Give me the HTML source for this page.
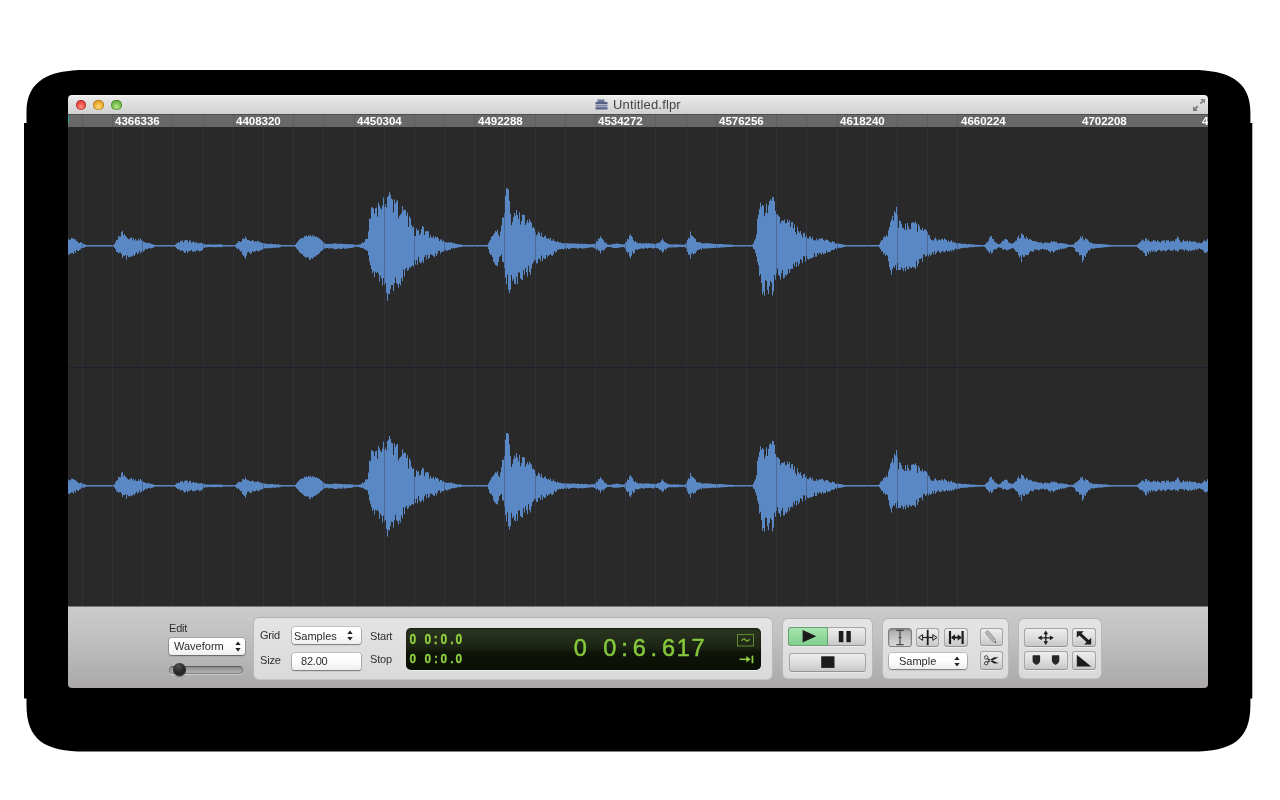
<!DOCTYPE html>
<html lang="en">
<head>
<meta charset="utf-8">
<title>Untitled.flpr</title>
<style>
*{box-sizing:border-box;margin:0;padding:0}
html,body{width:1280px;height:800px;overflow:hidden;background:#fff}
body{position:relative;font-family:"Liberation Sans","Helvetica Neue",Helvetica,Arial,sans-serif;font-size:11px;color:#2a2a2a}
.a{position:absolute}
.lb,.sel span,#ttext,#ruler b,.lcdt{will-change:transform}
#shadow{position:absolute;left:0;top:0;width:1280px;height:800px}
#title{left:68px;top:95px;width:1140px;height:19px;border-radius:4px 4px 0 0;background:linear-gradient(#f8f8f8 0,#e9e9e9 9%,#dedede 50%,#d0d0d0 100%)}
.tl{position:absolute;top:4.7px;width:10.8px;height:10.8px;border-radius:50%}
#ttext{left:612.6px;top:97.7px;height:14px;line-height:14px;font-size:13px;letter-spacing:.16px;color:#444;white-space:nowrap}
#ruler{left:68px;top:114px;width:1140px;height:13px;background:#686868;overflow:hidden;border-top:1px solid #4e4e4e}
#ruler i{position:absolute;top:-1px;width:1px;height:13px;background:#5a5d66}
#ruler b{position:absolute;top:0;height:13px;line-height:13px;font-size:11.5px;font-weight:bold;color:#fff;white-space:nowrap}
#wave{left:68px;top:127px;width:1140px;height:479px;background:#292929;overflow:hidden}
#wave i{position:absolute;top:0;width:1px;height:479px;background:rgba(58,66,84,.4)}
#wave svg{position:absolute;left:0;top:0}
#div{left:68px;top:367px;width:1140px;height:1px;background:#19222d}
#tb{left:68px;top:606px;width:1140px;height:82px;border-radius:0 0 4px 4px;background:linear-gradient(#cbcbcb 0,#c3c3c3 30%,#aaa8a8 100%);border-top:1px solid #7a7a7a}
.grp{position:absolute;top:618px;height:60.5px;border-radius:6px;background:linear-gradient(#e4e4e4,#dadada);border:1px solid #b9b9b9;border-top-color:#b1b1b1;border-bottom-color:#c6c4c4}
.lb{position:absolute;white-space:nowrap;font-size:11px;letter-spacing:-.2px;line-height:13px;height:13px;color:#303030}
.sel{position:absolute;border-radius:3px;background:linear-gradient(#ffffff 0,#fdfdfd 50%,#eeeeee 100%);box-shadow:0 0 0 .6px rgba(0,0,0,.28),0 1px 1.5px rgba(0,0,0,.38);white-space:nowrap;font-size:11px;color:#2c2c2c}
.sel span{position:absolute;line-height:13px;height:13px}
.sel svg{position:absolute}
.btn{position:absolute;border-radius:3px;background:linear-gradient(#ededed 0,#dedede 50%,#c8c8c8 100%);border:1px solid #a6a6a6;border-bottom-color:#949494;box-shadow:0 1px 0 rgba(255,255,255,.4)}
.btn svg{position:absolute;left:0;top:0}
#lcd{left:406px;top:627.5px;width:354.5px;height:42.5px;border-radius:5px;background:linear-gradient(#2d3622 0,#1c2514 45%,#0e1409 60%,#0a0f06 100%);box-shadow:0 1px 0 rgba(255,255,255,.6), inset 0 1px 2px rgba(0,0,0,.6)}
.lcdt{position:absolute;display:block;white-space:pre;color:#8fd13f;transform-origin:0 0}
.lcdt span{display:inline-block;text-align:center;vertical-align:top}
</style>
</head>
<body>
<svg id="shadow" viewBox="0 0 1280 800">
<path fill="#000" d="M85,70 H1192 C1227,70 1250.4,80 1250.4,112 V123 H1252.3 V698.5 H1250.4 V705 C1250.4,740 1232,751.6 1192,751.6 H85 C45,751.6 26.5,740 26.5,705 V698.5 H24 V123 H26.5 V112 C26.5,80 50,70 85,70Z"/>
</svg>

<!-- title bar -->
<div id="title" class="a">
 <span class="tl" style="left:7.6px;background:radial-gradient(circle at 50% 68%,#ff9088 0,#ea4c45 50%,#b9322d 100%);box-shadow:inset 0 0 0 .8px rgba(120,20,15,.45)"></span>
 <span class="tl" style="left:25.2px;background:radial-gradient(circle at 50% 68%,#ffdc7e 0,#efab33 50%,#c4841b 100%);box-shadow:inset 0 0 0 .8px rgba(130,80,10,.45)"></span>
 <span class="tl" style="left:43.2px;background:radial-gradient(circle at 50% 68%,#b9e88e 0,#73bd4b 50%,#4f9530 100%);box-shadow:inset 0 0 0 .8px rgba(40,90,20,.45)"></span>
</div>
<svg class="a" style="left:595px;top:99px" width="13" height="11" viewBox="0 0 13 11">
 <rect x="2.5" y="0.5" width="7" height="3" fill="#6d7597"/>
 <rect x="0.5" y="3" width="12" height="2.2" fill="#565f86"/>
 <rect x="0.5" y="5.8" width="12" height="1.8" fill="#7a82a3"/>
 <rect x="0.5" y="8.2" width="12" height="2.3" fill="#59618a"/>
</svg>
<div id="ttext" class="a">Untitled.flpr</div>
<svg class="a" style="left:1192px;top:98px" width="14" height="14" viewBox="0 0 14 14">
 <path d="M8.2,1 H13 V5.8 L11.3,4.1 L9,6.4 L7.6,5 L9.9,2.7 Z" fill="#8a8a8a"/>
 <path d="M5.8,13 H1 V8.2 L2.7,9.9 L5,7.6 L6.4,9 L4.1,11.3 Z" fill="#7a7a7a"/>
</svg>

<!-- ruler -->
<div id="ruler" class="a"><span class="a" style="left:0;top:1px;width:1px;height:7px;background:#25b0a6"></span><i style="left:14px"></i><i style="left:44px"></i><i style="left:74px"></i><i style="left:104px"></i><i style="left:135px"></i><i style="left:165px"></i><i style="left:195px"></i><i style="left:225px"></i><i style="left:255px"></i><i style="left:286px"></i><i style="left:316px"></i><i style="left:346px"></i><i style="left:376px"></i><i style="left:406px"></i><i style="left:436px"></i><i style="left:467px"></i><i style="left:497px"></i><i style="left:527px"></i><i style="left:557px"></i><i style="left:587px"></i><i style="left:618px"></i><i style="left:648px"></i><i style="left:678px"></i><i style="left:708px"></i><i style="left:738px"></i><i style="left:769px"></i><i style="left:799px"></i><i style="left:829px"></i><i style="left:859px"></i><i style="left:889px"></i><b style="left:47.4px">4366336</b><b style="left:168.2px">4408320</b><b style="left:288.9px">4450304</b><b style="left:409.7px">4492288</b><b style="left:530.4px">4534272</b><b style="left:651.2px">4576256</b><b style="left:771.9px">4618240</b><b style="left:892.7px">4660224</b><b style="left:1013.5px">4702208</b><b style="left:1134.2px">4744192</b></div>

<!-- waveform area -->
<div id="wave" class="a">
<svg width="1140" height="479" viewBox="0 0 1140 479">
<defs><path id="w" d="M0,-6.9V-6.9H1V-5.7H2V-6.2H3V-7.7H4V-7.6H5V-7.4H6V-6.2H7V-6.7H8V-4.7H9V-4.4H10V-3.0H11V-2.8H12V-3.7H13V-3.0H14V-2.8H15V-2.0H16V-1.6H17V-1.3H18V-0.9H19V-0.8H20V-0.8H21V-0.8H22V-0.8H23V-0.8H24V-0.8H25V-0.8H26V-0.8H27V-0.8H28V-0.8H29V-0.8H30V-0.8H31V-0.8H32V-0.8H33V-0.8H34V-0.8H35V-0.8H36V-0.8H37V-0.8H38V-0.8H39V-0.8H40V-0.8H41V-0.8H42V-0.8H43V-0.8H44V-0.8H45V-0.8H46V-1.8H47V-3.9H48V-5.8H49V-6.0H50V-9.5H51V-9.4H52V-9.2H53V-13.8H54V-15.0H55V-10.5H56V-11.7H57V-9.9H58V-9.1H59V-7.6H60V-6.6H61V-7.0H62V-7.6H63V-8.7H64V-6.0H65V-7.9H66V-5.3H67V-6.9H68V-5.2H69V-5.3H70V-7.0H71V-5.2H72V-7.3H73V-5.9H74V-4.2H75V-4.5H76V-3.9H77V-3.4H78V-2.9H79V-2.8H80V-3.4H81V-2.5H82V-2.2H83V-2.1H84V-1.6H85V-1.5H86V-1.1H87V-0.8H88V-0.8H89V-0.8H90V-0.8H91V-0.8H92V-0.8H93V-0.8H94V-0.8H95V-0.8H96V-0.8H97V-0.8H98V-0.8H99V-0.8H100V-0.8H101V-0.8H102V-0.8H103V-0.8H104V-0.8H105V-0.8H106V-0.8H107V-1.3H108V-2.4H109V-3.1H110V-3.5H111V-3.0H112V-5.0H113V-4.8H114V-5.5H115V-3.4H116V-5.0H117V-6.0H118V-5.5H119V-5.6H120V-3.4H121V-5.3H122V-5.4H123V-3.0H124V-3.7H125V-4.3H126V-3.2H127V-3.1H128V-4.1H129V-2.4H130V-2.7H131V-2.6H132V-2.7H133V-3.1H134V-2.6H135V-2.0H136V-1.9H137V-1.3H138V-1.4H139V-1.5H140V-1.5H141V-1.2H142V-1.4H143V-1.3H144V-1.3H145V-1.3H146V-1.4H147V-1.3H148V-1.3H149V-1.4H150V-1.2H151V-1.5H152V-1.5H153V-1.3H154V-1.0H155V-0.8H156V-0.8H157V-0.8H158V-0.8H159V-0.8H160V-0.8H161V-0.8H162V-0.8H163V-0.8H164V-0.8H165V-0.8H166V-0.8H167V-1.0H168V-2.2H169V-2.9H170V-4.7H171V-4.2H172V-3.9H173V-4.5H174V-7.1H175V-7.4H176V-6.7H177V-9.0H178V-7.2H179V-5.9H180V-6.0H181V-5.2H182V-4.9H183V-4.9H184V-5.7H185V-5.2H186V-3.7H187V-4.6H188V-4.1H189V-5.0H190V-4.7H191V-3.5H192V-3.8H193V-2.7H194V-2.9H195V-2.7H196V-2.6H197V-2.3H198V-2.1H199V-1.8H200V-2.0H201V-1.7H202V-2.0H203V-2.0H204V-1.9H205V-1.6H206V-1.8H207V-1.5H208V-1.4H209V-1.6H210V-1.5H211V-1.2H212V-1.0H213V-0.8H214V-0.8H215V-0.8H216V-0.8H217V-0.8H218V-0.8H219V-0.8H220V-0.8H221V-0.8H222V-0.8H223V-0.8H224V-0.8H225V-0.8H226V-0.8H227V-1.2H228V-2.6H229V-3.9H230V-5.3H231V-6.3H232V-7.3H233V-7.7H234V-7.6H235V-8.1H236V-9.8H237V-9.3H238V-10.4H239V-9.3H240V-10.6H241V-9.8H242V-11.0H243V-9.3H244V-10.6H245V-9.3H246V-10.0H247V-8.8H248V-9.3H249V-8.6H250V-8.1H251V-7.4H252V-6.5H253V-5.5H254V-4.6H255V-3.6H256V-2.9H257V-2.1H258V-1.9H259V-2.1H260V-2.0H261V-1.8H262V-2.1H263V-1.8H264V-2.0H265V-2.2H266V-2.4H267V-2.5H268V-2.1H269V-2.4H270V-1.9H271V-2.0H272V-2.2H273V-2.0H274V-2.0H275V-1.7H276V-1.9H277V-1.6H278V-1.8H279V-1.7H280V-1.6H281V-1.6H282V-1.6H283V-1.5H284V-1.5H285V-1.4H286V-1.2H287V-1.1H288V-1.1H289V-1.0H290V-1.2H291V-1.4H292V-1.5H293V-2.2H294V-3.6H295V-2.9H296V-4.0H297V-6.8H298V-7.0H299V-6.9H300V-14.4H301V-27.6H302V-26.7H303V-38.6H304V-38.4H305V-37.3H306V-32.1H307V-37.6H308V-38.2H309V-29.3H310V-43.2H311V-40.5H312V-38.1H313V-36.5H314V-40.4H315V-48.2H316V-38.9H317V-41.6H318V-38.4H319V-48.8H320V-50.0H321V-54.0H322V-51.2H323V-47.2H324V-46.3H325V-33.4H326V-46.3H327V-42.4H328V-44.5H329V-45.5H330V-27.6H331V-30.1H332V-31.2H333V-32.6H334V-39.8H335V-35.2H336V-36.4H337V-35.7H338V-30.3H339V-33.2H340V-18.9H341V-29.6H342V-27.6H343V-20.8H344V-18.2H345V-19.1H346V-9.8H347V-9.8H348V-17.2H349V-15.0H350V-16.1H351V-10.8H352V-12.4H353V-16.8H354V-19.7H355V-18.8H356V-10.7H357V-14.6H358V-14.4H359V-15.0H360V-14.5H361V-8.0H362V-10.9H363V-8.3H364V-8.1H365V-10.0H366V-7.2H367V-9.4H368V-8.6H369V-8.8H370V-7.2H371V-4.7H372V-6.4H373V-6.5H374V-4.4H375V-5.3H376V-4.1H377V-3.5H378V-3.6H379V-3.0H380V-3.5H381V-3.0H382V-3.7H383V-3.5H384V-2.6H385V-2.8H386V-2.5H387V-2.0H388V-1.7H389V-1.8H390V-1.5H391V-1.6H392V-1.3H393V-1.1H394V-0.9H395V-0.8H396V-0.8H397V-0.8H398V-0.8H399V-0.8H400V-0.8H401V-0.8H402V-0.8H403V-0.8H404V-0.8H405V-0.8H406V-0.8H407V-0.8H408V-0.8H409V-0.8H410V-0.8H411V-0.8H412V-0.8H413V-0.8H414V-0.8H415V-0.8H416V-0.8H417V-0.8H418V-0.8H419V-1.0H420V-2.6H421V-4.7H422V-6.0H423V-9.0H424V-9.9H425V-11.1H426V-12.9H427V-14.7H428V-14.1H429V-15.9H430V-11.2H431V-9.4H432V-14.4H433V-20.2H434V-28.4H435V-28.4H436V-32.6H437V-50.0H438V-57.5H439V-57.5H440V-56.0H441V-45.0H442V-32.1H443V-20.5H444V-24.1H445V-28.8H446V-32.8H447V-30.3H448V-35.7H449V-30.7H450V-26.8H451V-33.6H452V-21.2H453V-24.9H454V-31.2H455V-31.0H456V-30.8H457V-20.8H458V-23.3H459V-25.8H460V-23.1H461V-26.5H462V-24.5H463V-23.1H464V-18.0H465V-18.7H466V-17.1H467V-13.4H468V-10.4H469V-11.5H470V-14.4H471V-13.1H472V-9.8H473V-13.1H474V-8.8H475V-8.3H476V-9.5H477V-10.2H478V-7.3H479V-7.2H480V-7.6H481V-6.3H482V-8.1H483V-5.0H484V-5.0H485V-6.8H486V-4.8H487V-4.4H488V-3.6H489V-4.8H490V-3.6H491V-3.3H492V-3.4H493V-2.7H494V-2.9H495V-2.4H496V-2.7H497V-2.6H498V-2.5H499V-2.6H500V-2.4H501V-2.6H502V-2.2H503V-2.2H504V-2.6H505V-2.4H506V-2.1H507V-2.5H508V-2.0H509V-2.4H510V-2.4H511V-1.9H512V-2.0H513V-1.9H514V-2.2H515V-1.8H516V-2.0H517V-2.1H518V-1.9H519V-1.8H520V-1.5H521V-1.5H522V-1.8H523V-1.6H524V-1.7H525V-1.8H526V-2.1H527V-2.4H528V-4.8H529V-4.2H530V-7.4H531V-7.0H532V-9.6H533V-7.7H534V-6.7H535V-5.5H536V-3.4H537V-3.4H538V-2.2H539V-1.2H540V-1.1H541V-1.1H542V-1.2H543V-1.4H544V-1.5H545V-1.7H546V-2.2H547V-1.9H548V-2.4H549V-2.3H550V-2.0H551V-1.8H552V-1.8H553V-1.6H554V-1.2H555V-1.5H556V-1.7H557V-4.0H558V-3.7H559V-7.1H560V-6.4H561V-10.0H562V-11.5H563V-9.9H564V-8.5H565V-5.5H566V-4.0H567V-4.9H568V-3.2H569V-3.3H570V-2.3H571V-2.9H572V-3.1H573V-2.1H574V-2.5H575V-2.6H576V-2.4H577V-2.6H578V-2.7H579V-2.4H580V-2.7H581V-2.2H582V-2.3H583V-2.2H584V-2.3H585V-2.1H586V-2.1H587V-1.8H588V-2.3H589V-2.7H590V-3.4H591V-2.9H592V-4.2H593V-5.5H594V-7.2H595V-5.3H596V-3.9H597V-3.7H598V-2.8H599V-2.3H600V-1.8H601V-1.6H602V-1.3H603V-1.4H604V-1.4H605V-1.3H606V-1.6H607V-1.5H608V-1.5H609V-1.3H610V-1.4H611V-1.2H612V-1.2H613V-1.1H614V-1.2H615V-1.1H616V-1.0H617V-2.0H618V-3.2H619V-5.8H620V-8.1H621V-7.4H622V-14.2H623V-10.2H624V-9.8H625V-8.8H626V-7.8H627V-6.8H628V-4.1H629V-3.9H630V-3.5H631V-3.4H632V-3.8H633V-2.5H634V-2.2H635V-2.5H636V-2.4H637V-3.0H638V-2.3H639V-2.7H640V-2.7H641V-2.3H642V-2.6H643V-2.1H644V-2.0H645V-2.0H646V-1.9H647V-1.9H648V-1.9H649V-1.8H650V-1.7H651V-1.9H652V-1.9H653V-1.9H654V-1.8H655V-1.6H656V-1.3H657V-1.3H658V-1.3H659V-1.2H660V-1.2H661V-1.3H662V-1.2H663V-1.1H664V-1.0H665V-0.9H666V-0.8H667V-0.8H668V-0.8H669V-0.8H670V-0.8H671V-0.8H672V-0.8H673V-0.8H674V-0.8H675V-0.8H676V-0.8H677V-0.8H678V-0.8H679V-0.8H680V-0.8H681V-0.8H682V-0.8H683V-0.8H684V-1.0H685V-2.9H686V-5.2H687V-7.2H688V-11.2H689V-27.1H690V-31.4H691V-36.9H692V-43.0H693V-39.0H694V-40.8H695V-40.0H696V-29.6H697V-33.0H698V-42.0H699V-32.5H700V-40.3H701V-44.8H702V-46.5H703V-45.0H704V-49.0H705V-48.3H706V-44.5H707V-34.7H708V-31.0H709V-31.7H710V-30.1H711V-29.0H712V-22.6H713V-24.7H714V-25.3H715V-25.0H716V-26.2H717V-22.3H718V-22.9H719V-26.3H720V-23.7H721V-25.8H722V-19.1H723V-23.5H724V-23.9H725V-17.5H726V-21.2H727V-13.8H728V-11.4H729V-19.1H730V-14.7H731V-13.0H732V-14.8H733V-11.2H734V-8.5H735V-12.5H736V-13.1H737V-8.9H738V-10.7H739V-7.5H740V-7.0H741V-9.0H742V-9.2H743V-6.9H744V-8.7H745V-5.5H746V-5.4H747V-5.5H748V-7.3H749V-5.2H750V-6.4H751V-7.3H752V-6.7H753V-7.6H754V-7.7H755V-5.9H756V-4.7H757V-6.1H758V-6.3H759V-5.9H760V-5.3H761V-3.9H762V-3.5H763V-3.4H764V-4.6H765V-4.0H766V-3.6H767V-2.0H768V-2.4H769V-2.4H770V-2.3H771V-2.0H772V-1.9H773V-1.6H774V-1.5H775V-1.2H776V-1.0H777V-0.8H778V-0.8H779V-0.8H780V-0.8H781V-0.8H782V-0.8H783V-0.8H784V-0.8H785V-0.8H786V-0.8H787V-0.8H788V-0.8H789V-0.8H790V-0.8H791V-0.8H792V-0.8H793V-0.8H794V-0.8H795V-0.8H796V-0.8H797V-0.8H798V-0.8H799V-0.8H800V-0.8H801V-0.8H802V-0.8H803V-0.8H804V-0.8H805V-0.8H806V-0.8H807V-0.8H808V-0.8H809V-0.8H810V-0.8H811V-1.9H812V-3.8H813V-5.8H814V-5.3H815V-8.3H816V-9.6H817V-8.8H818V-11.1H819V-9.2H820V-15.8H821V-18.9H822V-23.9H823V-26.2H824V-29.9H825V-25.1H826V-34.9H827V-33.0H828V-39.0H829V-31.0H830V-18.0H831V-25.5H832V-24.7H833V-22.1H834V-18.4H835V-17.5H836V-16.0H837V-22.4H838V-16.0H839V-22.8H840V-19.3H841V-16.6H842V-16.8H843V-22.9H844V-23.5H845V-23.2H846V-22.9H847V-24.6H848V-22.3H849V-14.0H850V-21.9H851V-19.5H852V-16.2H853V-15.7H854V-18.1H855V-14.7H856V-16.5H857V-16.2H858V-15.4H859V-13.6H860V-11.0H861V-10.2H862V-7.1H863V-5.5H864V-5.7H865V-5.1H866V-7.1H867V-8.2H868V-6.3H869V-4.9H870V-6.3H871V-6.3H872V-5.6H873V-6.8H874V-6.8H875V-5.6H876V-7.6H877V-6.5H878V-5.7H879V-4.1H880V-5.6H881V-3.6H882V-4.9H883V-5.6H884V-3.3H885V-4.4H886V-3.3H887V-3.1H888V-2.3H889V-3.0H890V-2.6H891V-2.6H892V-2.2H893V-2.2H894V-1.9H895V-2.0H896V-2.0H897V-2.1H898V-1.6H899V-1.6H900V-1.7H901V-1.7H902V-1.5H903V-1.4H904V-1.5H905V-1.2H906V-1.3H907V-1.1H908V-1.1H909V-1.0H910V-1.0H911V-0.9H912V-0.9H913V-0.8H914V-0.8H915V-0.8H916V-1.1H917V-1.8H918V-3.4H919V-3.6H920V-5.0H921V-8.1H922V-9.5H923V-9.8H924V-6.9H925V-6.9H926V-4.2H927V-3.5H928V-3.0H929V-1.8H930V-1.7H931V-1.7H932V-2.4H933V-3.5H934V-5.1H935V-4.7H936V-6.6H937V-6.5H938V-6.7H939V-5.7H940V-3.3H941V-3.3H942V-2.6H943V-2.3H944V-2.3H945V-2.7H946V-3.6H947V-5.0H948V-5.2H949V-8.3H950V-10.1H951V-7.3H952V-7.8H953V-12.5H954V-11.4H955V-10.8H956V-8.0H957V-6.8H958V-9.2H959V-7.9H960V-5.9H961V-6.6H962V-6.7H963V-5.8H964V-4.7H965V-4.7H966V-4.9H967V-4.3H968V-4.4H969V-3.7H970V-3.6H971V-3.3H972V-3.5H973V-3.3H974V-2.2H975V-2.3H976V-3.5H977V-3.6H978V-2.7H979V-3.2H980V-2.9H981V-2.9H982V-3.6H983V-4.9H984V-3.5H985V-4.7H986V-4.3H987V-3.8H988V-4.0H989V-2.9H990V-2.4H991V-2.5H992V-2.8H993V-2.8H994V-2.4H995V-2.6H996V-2.0H997V-2.2H998V-1.9H999V-1.6H1000V-1.1H1001V-1.0H1002V-1.1H1003V-1.1H1004V-1.2H1005V-1.4H1006V-2.2H1007V-3.7H1008V-3.7H1009V-4.6H1010V-5.8H1011V-6.7H1012V-9.4H1013V-7.9H1014V-10.0H1015V-6.4H1016V-5.3H1017V-7.7H1018V-6.7H1019V-6.2H1020V-5.1H1021V-3.2H1022V-3.5H1023V-2.7H1024V-2.6H1025V-2.0H1026V-2.2H1027V-1.9H1028V-1.9H1029V-1.9H1030V-2.0H1031V-1.7H1032V-1.9H1033V-1.8H1034V-1.7H1035V-1.4H1036V-1.6H1037V-1.4H1038V-1.4H1039V-1.3H1040V-1.1H1041V-1.0H1042V-0.9H1043V-0.8H1044V-0.8H1045V-0.8H1046V-0.8H1047V-0.8H1048V-0.8H1049V-0.8H1050V-0.8H1051V-0.8H1052V-0.8H1053V-0.8H1054V-0.8H1055V-0.8H1056V-0.8H1057V-0.8H1058V-0.8H1059V-0.8H1060V-0.8H1061V-0.8H1062V-0.8H1063V-0.8H1064V-0.8H1065V-0.8H1066V-0.8H1067V-0.8H1068V-0.8H1069V-1.3H1070V-2.3H1071V-3.0H1072V-3.9H1073V-5.2H1074V-6.4H1075V-5.2H1076V-4.5H1077V-7.4H1078V-7.4H1079V-5.0H1080V-6.3H1081V-4.9H1082V-3.8H1083V-4.2H1084V-4.2H1085V-5.7H1086V-5.3H1087V-4.7H1088V-3.8H1089V-5.8H1090V-4.3H1091V-4.1H1092V-3.4H1093V-4.6H1094V-5.1H1095V-5.6H1096V-5.4H1097V-3.3H1098V-5.7H1099V-5.4H1100V-5.7H1101V-3.7H1102V-4.8H1103V-4.3H1104V-5.0H1105V-5.1H1106V-4.0H1107V-6.5H1108V-6.8H1109V-9.4H1110V-8.4H1111V-5.8H1112V-3.8H1113V-3.6H1114V-4.6H1115V-6.0H1116V-4.5H1117V-4.6H1118V-4.8H1119V-5.2H1120V-3.6H1121V-5.4H1122V-4.7H1123V-4.0H1124V-4.1H1125V-4.2H1126V-4.3H1127V-4.4H1128V-3.4H1129V-2.5H1130V-3.5H1131V-3.0H1132V-2.6H1133V-2.8H1134V-3.2H1135V-4.7H1136V-6.0H1137V-4.4H1138V-5.0H1139V-7.0H1140V5.8H1139V6.8H1138V7.2H1137V6.6H1136V5.2H1135V3.7H1134V4.0H1133V3.2H1132V2.7H1131V2.9H1130V3.6H1129V4.2H1128V2.9H1127V4.8H1126V4.1H1125V4.5H1124V4.8H1123V5.5H1122V4.1H1121V5.7H1120V5.0H1119V4.2H1118V3.4H1117V5.1H1116V4.1H1115V3.8H1114V3.4H1113V3.6H1112V3.4H1111V5.4H1110V5.8H1109V4.7H1108V5.2H1107V3.5H1106V4.2H1105V5.0H1104V4.6H1103V5.1H1102V3.9H1101V3.7H1100V4.1H1099V4.9H1098V5.8H1097V5.0H1096V4.4H1095V4.7H1094V5.8H1093V5.0H1092V3.9H1091V4.2H1090V5.0H1089V6.1H1088V5.8H1087V5.9H1086V4.5H1085V6.2H1084V4.7H1083V6.9H1082V5.2H1081V8.4H1080V6.3H1079V10.3H1078V10.2H1077V7.4H1076V6.6H1075V4.7H1074V5.1H1073V4.3H1072V3.8H1071V2.1H1070V1.6H1069V0.8H1068V0.8H1067V0.8H1066V0.8H1065V0.8H1064V0.8H1063V0.8H1062V0.8H1061V0.8H1060V0.8H1059V0.8H1058V0.8H1057V0.8H1056V0.8H1055V0.8H1054V0.8H1053V0.8H1052V0.8H1051V0.8H1050V0.8H1049V0.8H1048V0.8H1047V0.8H1046V0.8H1045V0.8H1044V0.8H1043V0.9H1042V1.0H1041V1.1H1040V1.0H1039V1.4H1038V1.4H1037V1.5H1036V1.6H1035V1.8H1034V1.9H1033V1.9H1032V2.1H1031V1.9H1030V2.1H1029V2.5H1028V2.4H1027V2.7H1026V2.9H1025V3.0H1024V2.4H1023V3.7H1022V4.9H1021V4.5H1020V6.8H1019V7.9H1018V11.2H1017V10.0H1016V14.2H1015V16.5H1014V9.1H1013V9.5H1012V9.7H1011V6.8H1010V6.5H1009V6.1H1008V5.1H1007V2.2H1006V1.8H1005V1.2H1004V1.1H1003V1.1H1002V1.0H1001V1.5H1000V1.5H999V1.9H998V2.6H997V2.6H996V3.2H995V2.4H994V3.8H993V2.9H992V3.9H991V3.5H990V4.5H989V4.5H988V4.8H987V5.9H986V7.0H985V5.5H984V4.9H983V6.9H982V5.7H981V5.3H980V3.7H979V4.1H978V3.4H977V4.2H976V3.0H975V3.2H974V4.0H973V3.3H972V4.4H971V4.8H970V4.0H969V4.0H968V3.9H967V3.7H966V5.9H965V5.8H964V5.3H963V5.4H962V6.8H961V8.9H960V9.2H959V9.7H958V8.7H957V11.0H956V11.1H955V9.1H954V16.5H953V9.9H952V12.2H951V9.4H950V6.2H949V6.2H948V5.4H947V3.5H946V2.8H945V2.2H944V2.8H943V2.9H942V3.8H941V4.0H940V4.5H939V4.7H938V3.5H937V3.1H936V4.2H935V3.5H934V2.0H933V2.1H932V1.8H931V1.5H930V2.1H929V3.6H928V3.5H927V3.4H926V4.4H925V7.0H924V7.7H923V5.5H922V7.4H921V6.0H920V4.7H919V3.5H918V1.7H917V1.1H916V0.8H915V0.8H914V0.8H913V0.9H912V0.9H911V1.0H910V1.0H909V1.1H908V1.0H907V1.3H906V1.4H905V1.5H904V1.5H903V1.3H902V1.6H901V1.7H900V2.0H899V1.9H898V2.1H897V2.0H896V2.0H895V2.5H894V2.1H893V2.7H892V3.2H891V3.0H890V3.6H889V3.7H888V2.8H887V3.8H886V5.5H885V3.9H884V5.6H883V4.3H882V6.0H881V5.2H880V5.7H879V4.5H878V5.6H877V6.4H876V6.0H875V4.6H874V6.1H873V7.0H872V6.7H871V4.8H870V5.8H869V7.0H868V8.7H867V5.5H866V8.7H865V6.2H864V8.8H863V10.0H862V8.4H861V10.6H860V8.1H859V10.1H858V11.0H857V8.8H856V8.8H855V16.1H854V12.3H853V13.1H852V13.2H851V17.6H850V21.0H849V15.0H848V23.2H847V21.6H846V21.4H845V20.9H844V22.4H843V22.0H842V20.6H841V23.5H840V23.4H839V20.7H838V25.4H837V22.3H836V25.4H835V22.9H834V21.5H833V24.1H832V24.2H831V24.3H830V17.2H829V24.5H828V19.1H827V22.2H826V20.8H825V23.4H824V29.0H823V24.6H822V21.5H821V15.4H820V10.0H819V9.0H818V9.9H817V7.5H816V8.6H815V5.5H814V5.7H813V3.2H812V1.6H811V0.8H810V0.8H809V0.8H808V0.8H807V0.8H806V0.8H805V0.8H804V0.8H803V0.8H802V0.8H801V0.8H800V0.8H799V0.8H798V0.8H797V0.8H796V0.8H795V0.8H794V0.8H793V0.8H792V0.8H791V0.8H790V0.8H789V0.8H788V0.8H787V0.8H786V0.8H785V0.8H784V0.8H783V0.8H782V0.8H781V0.8H780V0.8H779V0.8H778V1.0H777V1.3H776V1.4H775V1.5H774V2.1H773V2.0H772V2.0H771V2.4H770V1.9H769V3.4H768V2.2H767V3.8H766V4.3H765V4.2H764V4.1H763V5.9H762V6.2H761V6.1H760V6.9H759V5.0H758V7.7H757V7.7H756V8.5H755V6.6H754V9.0H753V7.6H752V6.9H751V8.9H750V7.1H749V11.0H748V11.0H747V7.5H746V11.2H745V12.2H744V12.7H743V12.1H742V13.1H741V13.6H740V13.0H739V10.3H738V15.7H737V10.7H736V10.1H735V17.2H734V14.4H733V13.3H732V18.0H731V20.0H730V16.0H729V21.3H728V16.3H727V20.5H726V18.0H725V23.3H724V22.9H723V23.6H722V27.3H721V23.3H720V28.3H719V29.9H718V28.9H717V32.0H716V32.4H715V24.1H714V27.4H713V33.7H712V30.5H711V29.2H710V22.7H709V27.4H708V33.6H707V29.2H706V45.7H705V49.8H704V36.9H703V35.2H702V40.4H701V48.2H700V44.1H699V35.1H698V34.5H697V50.0H696V46.0H695V48.8H694V37.3H693V28.1H692V30.2H691V19.4H690V15.9H689V10.6H688V7.3H687V3.7H686V3.1H685V1.0H684V0.8H683V0.8H682V0.8H681V0.8H680V0.8H679V0.8H678V0.8H677V0.8H676V0.8H675V0.8H674V0.8H673V0.8H672V0.8H671V0.8H670V0.8H669V0.8H668V0.8H667V0.8H666V0.9H665V1.0H664V1.1H663V1.2H662V1.1H661V1.1H660V1.3H659V1.3H658V1.4H657V1.7H656V1.5H655V1.6H654V1.7H653V1.8H652V2.0H651V1.9H650V2.0H649V2.0H648V2.3H647V2.0H646V2.1H645V2.2H644V2.5H643V2.1H642V2.5H641V2.7H640V2.8H639V2.5H638V3.0H637V2.6H636V3.0H635V2.1H634V4.1H633V2.9H632V3.7H631V4.1H630V4.3H629V5.7H628V7.8H627V7.6H626V8.8H625V7.3H624V8.1H623V13.0H622V8.6H621V9.0H620V6.1H619V3.0H618V2.0H617V1.0H616V1.1H615V1.2H614V1.2H613V1.3H612V1.1H611V1.5H610V1.5H609V1.5H608V1.6H607V1.6H606V1.5H605V1.7H604V1.6H603V1.7H602V1.6H601V1.7H600V2.5H599V2.9H598V4.5H597V3.3H596V5.9H595V7.0H594V5.0H593V3.9H592V4.6H591V2.9H590V2.5H589V2.4H588V2.1H587V2.1H586V2.8H585V2.8H584V2.3H583V2.0H582V2.2H581V2.3H580V2.7H579V2.5H578V2.0H577V2.8H576V3.2H575V2.6H574V2.5H573V3.0H572V3.1H571V3.5H570V4.2H569V3.7H568V3.6H567V7.1H566V8.1H565V5.6H564V9.9H563V12.4H562V10.7H561V6.2H560V7.1H559V5.6H558V3.4H557V1.8H556V1.4H555V1.2H554V1.3H553V1.8H552V1.8H551V1.9H550V2.2H549V2.1H548V2.2H547V2.2H546V2.1H545V1.9H544V1.4H543V1.2H542V1.1H541V1.2H540V1.2H539V1.8H538V2.6H537V3.8H536V5.3H535V3.9H534V4.8H533V7.7H532V4.7H531V5.0H530V3.0H529V3.9H528V3.1H527V2.4H526V1.9H525V1.5H524V1.5H523V1.8H522V1.8H521V1.9H520V2.2H519V2.0H518V2.4H517V2.4H516V2.6H515V2.7H514V2.6H513V2.3H512V2.3H511V2.9H510V2.9H509V2.4H508V2.5H507V2.0H506V2.1H505V2.5H504V2.3H503V2.5H502V3.4H501V3.3H500V2.1H499V3.5H498V2.2H497V2.9H496V3.7H495V3.2H494V3.1H493V3.4H492V3.2H491V4.2H490V3.8H489V6.2H488V6.8H487V5.1H486V8.5H485V10.0H484V9.8H483V8.2H482V9.1H481V9.9H480V11.1H479V9.1H478V13.2H477V12.9H476V11.9H475V15.1H474V9.8H473V15.4H472V12.7H471V13.3H470V17.5H469V17.7H468V14.6H467V14.1H466V16.5H465V18.0H464V22.6H463V28.9H462V26.3H461V19.9H460V30.9H459V26.4H458V22.3H457V28.9H456V24.4H455V34.5H454V33.8H453V32.8H452V26.7H451V26.8H450V38.1H449V30.9H448V38.4H447V37.7H446V33.3H445V35.3H444V29.2H443V44.0H442V47.5H441V44.0H440V28.7H439V38.7H438V31.6H437V22.2H436V16.1H435V15.9H434V8.6H433V10.1H432V11.2H431V16.2H430V20.4H429V19.8H428V19.1H427V17.5H426V15.7H425V11.2H424V8.8H423V9.3H422V7.2H421V3.5H420V1.0H419V0.8H418V0.8H417V0.8H416V0.8H415V0.8H414V0.8H413V0.8H412V0.8H411V0.8H410V0.8H409V0.8H408V0.8H407V0.8H406V0.8H405V0.8H404V0.8H403V0.8H402V0.8H401V0.8H400V0.8H399V0.8H398V0.8H397V0.8H396V0.8H395V0.9H394V1.1H393V1.3H392V1.5H391V1.4H390V1.7H389V2.2H388V2.1H387V2.6H386V2.3H385V3.0H384V2.3H383V3.7H382V4.1H381V4.1H380V4.6H379V5.4H378V3.9H377V4.7H376V5.8H375V6.0H374V6.2H373V7.9H372V4.9H371V5.3H370V7.7H369V10.3H368V7.7H367V11.4H366V10.5H365V9.5H364V9.0H363V8.1H362V11.9H361V13.2H360V9.0H359V13.6H358V9.3H357V11.3H356V17.2H355V14.7H354V16.6H353V17.8H352V15.9H351V11.0H350V19.3H349V14.2H348V18.8H347V14.3H346V20.6H345V19.8H344V20.5H343V22.0H342V21.6H341V24.3H340V25.1H339V21.9H338V23.4H337V30.8H336V23.7H335V35.4H334V32.3H333V39.8H332V37.7H331V42.0H330V38.4H329V37.5H328V31.6H327V37.4H326V45.3H325V39.3H324V39.1H323V43.3H322V48.4H321V48.0H320V55.0H319V47.0H318V37.3H317V39.2H316V32.2H315V39.8H314V32.6H313V30.0H312V35.9H311V28.0H310V26.0H309V27.2H308V26.0H307V31.1H306V25.5H305V27.5H304V23.2H303V19.5H302V15.8H301V9.4H300V5.1H299V4.4H298V4.5H297V3.2H296V3.0H295V2.1H294V2.1H293V1.9H292V1.5H291V1.2H290V1.1H289V1.0H288V1.2H287V1.4H286V1.6H285V1.9H284V2.1H283V2.3H282V2.5H281V2.5H280V2.5H279V2.9H278V2.9H277V2.9H276V1.9H275V2.9H274V3.1H273V3.0H272V3.1H271V2.2H270V3.4H269V3.2H268V3.5H267V3.5H266V2.9H265V2.4H264V2.8H263V2.2H262V2.8H261V2.6H260V2.2H259V2.1H258V2.6H257V2.7H256V3.5H255V4.5H254V5.3H253V6.0H252V7.4H251V8.5H250V9.3H249V9.5H248V10.7H247V10.9H246V11.6H245V13.1H244V12.3H243V14.0H242V14.3H241V11.7H240V11.4H239V11.6H238V11.4H237V11.0H236V10.1H235V8.3H234V8.5H233V7.1H232V6.6H231V4.9H230V3.6H229V2.7H228V1.2H227V0.8H226V0.8H225V0.8H224V0.8H223V0.8H222V0.8H221V0.8H220V0.8H219V0.8H218V0.8H217V0.8H216V0.8H215V0.8H214V0.8H213V1.3H212V1.7H211V1.9H210V1.7H209V1.7H208V2.3H207V2.0H206V1.9H205V2.1H204V2.4H203V2.3H202V2.6H201V2.1H200V2.7H199V2.4H198V2.4H197V2.7H196V2.9H195V3.8H194V4.4H193V4.1H192V5.1H191V5.9H190V5.3H189V4.7H188V5.7H187V5.8H186V6.2H185V5.2H184V7.5H183V8.2H182V6.9H181V5.9H180V6.6H179V9.6H178V13.0H177V11.2H176V10.0H175V8.8H174V5.4H173V5.8H172V4.5H171V2.7H170V3.5H169V2.4H168V1.0H167V0.8H166V0.8H165V0.8H164V0.8H163V0.8H162V0.8H161V0.8H160V0.8H159V0.8H158V0.8H157V0.8H156V0.8H155V1.0H154V1.5H153V1.2H152V1.5H151V1.3H150V1.4H149V1.2H148V1.5H147V1.5H146V1.3H145V1.2H144V1.5H143V1.3H142V1.3H141V1.3H140V1.5H139V1.5H138V1.5H137V2.2H136V2.2H135V4.1H134V5.1H133V5.0H132V5.8H131V4.6H130V4.6H129V4.6H128V6.0H127V5.3H126V6.1H125V5.7H124V4.0H123V5.2H122V5.3H121V5.6H120V7.2H119V4.9H118V6.7H117V7.3H116V5.8H115V4.2H114V5.2H113V5.0H112V3.6H111V4.0H110V3.1H109V2.5H108V1.2H107V0.8H106V0.8H105V0.8H104V0.8H103V0.8H102V0.8H101V0.8H100V0.8H99V0.8H98V0.8H97V0.8H96V0.8H95V0.8H94V0.8H93V0.8H92V0.8H91V0.8H90V0.8H89V0.8H88V0.8H87V1.2H86V1.6H85V2.1H84V2.5H83V2.8H82V2.2H81V2.4H80V3.1H79V3.8H78V3.0H77V4.7H76V5.9H75V4.8H74V6.5H73V7.4H72V5.0H71V7.8H70V8.4H69V6.4H68V8.0H67V10.3H66V9.1H65V10.5H64V10.9H63V10.7H62V11.7H61V11.2H60V9.8H59V14.0H58V9.1H57V10.3H56V10.0H55V12.3H54V8.3H53V6.7H52V6.9H51V7.6H50V6.3H49V6.3H48V3.4H47V1.9H46V0.8H45V0.8H44V0.8H43V0.8H42V0.8H41V0.8H40V0.8H39V0.8H38V0.8H37V0.8H36V0.8H35V0.8H34V0.8H33V0.8H32V0.8H31V0.8H30V0.8H29V0.8H28V0.8H27V0.8H26V0.8H25V0.8H24V0.8H23V0.8H22V0.8H21V0.8H20V0.8H19V0.9H18V1.3H17V1.8H16V2.2H15V2.5H14V2.2H13V3.8H12V4.1H11V5.3H10V5.3H9V4.2H8V7.3H7V5.5H6V8.3H5V7.3H4V7.1H3V7.7H2V8.8H1V8.6H0Z"/></defs>
<use href="#w" transform="translate(0,118.8)" fill="#5a88c5"/>
<use href="#w" transform="translate(0,358.8) scale(1,0.92)" fill="#5a88c5"/>
</svg>
<i style="left:14px"></i><i style="left:44px"></i><i style="left:74px"></i><i style="left:104px"></i><i style="left:135px"></i><i style="left:165px"></i><i style="left:195px"></i><i style="left:225px"></i><i style="left:255px"></i><i style="left:286px"></i><i style="left:316px"></i><i style="left:346px"></i><i style="left:376px"></i><i style="left:406px"></i><i style="left:436px"></i><i style="left:467px"></i><i style="left:497px"></i><i style="left:527px"></i><i style="left:557px"></i><i style="left:587px"></i><i style="left:618px"></i><i style="left:648px"></i><i style="left:678px"></i><i style="left:708px"></i><i style="left:738px"></i><i style="left:769px"></i><i style="left:799px"></i><i style="left:829px"></i><i style="left:859px"></i><i style="left:889px"></i>
</div>
<div id="div" class="a"></div>

<!-- toolbar -->
<div id="tb" class="a"></div>
<!-- left controls -->
<div class="lb" style="left:169.3px;top:621.5px">Edit</div>
<div class="sel" style="left:168.7px;top:638px;width:76.6px;height:17px"><span style="left:5.4px;top:2px">Waveform</span>
 <svg style="left:65.8px;top:3px" width="8" height="11" viewBox="0 0 8 11"><path d="M4,0.6 L6.7,4 H1.3Z M4,10.4 L6.7,7 H1.3Z" fill="#222"/></svg></div>
<div class="a" style="left:168.5px;top:666px;width:74.5px;height:7.7px;border-radius:4px;border:1px solid #727272;border-top-color:#5e5e5e;border-bottom-color:#808080;background:linear-gradient(#888,#a4a4a4 55%,#b0b0b0);box-shadow:0 1px 0 rgba(255,255,255,.4)"></div>
<div class="a" style="left:173.2px;top:662.8px;width:13.2px;height:13.2px;border-radius:50%;background:radial-gradient(circle at 42% 26%,#555 0,#2e2e2e 40%,#1b1b1b 100%);box-shadow:0 1px 1px rgba(0,0,0,.35)"></div>

<!-- group 1 : grid + lcd -->
<div class="grp" style="left:252.7px;top:617.4px;width:520.6px;height:62.3px"></div>
<div class="lb" style="left:259.8px;top:628.5px">Grid</div>
<div class="lb" style="left:259.8px;top:654.4px">Size</div>
<div class="sel" style="left:291.8px;top:626.9px;width:69.5px;height:17.5px"><span style="left:2.7px;top:2.7px">Samples</span>
 <svg style="left:54.5px;top:3.2px" width="8" height="11" viewBox="0 0 8 11"><path d="M4,0.6 L6.7,4 H1.3Z M4,10.4 L6.7,7 H1.3Z" fill="#222"/></svg></div>
<div class="sel" style="left:291.8px;top:653px;width:69.5px;height:17.3px;border-radius:2.5px"><span style="left:9.3px;top:1.8px;letter-spacing:-.2px">82.00</span></div>
<div class="lb" style="left:369.8px;top:629.5px">Start</div>
<div class="lb" style="left:369.8px;top:653.4px">Stop</div>
<div id="lcd" class="a"></div>
<div class="lcdt" style="left:409.0px;top:632.5px;font-family:'Liberation Sans',Arial,sans-serif;font-size:13.8px;line-height:13.8px;font-weight:bold;-webkit-text-stroke:.3px #8fd13f"><span style="width:7.73px;transform:scaleX(0.87)">0</span><span style="width:7.73px;transform:scaleX(0.87)"> </span><span style="width:7.73px;transform:scaleX(0.87)">0</span><span style="width:7.73px;transform:scaleX(0.87)">:</span><span style="width:7.73px;transform:scaleX(0.87)">0</span><span style="width:7.73px;transform:scaleX(0.87)">.</span><span style="width:7.73px;transform:scaleX(0.87)">0</span></div>
<div class="lcdt" style="left:409.0px;top:652.2px;font-family:'Liberation Sans',Arial,sans-serif;font-size:13.6px;line-height:13.6px;font-weight:bold;-webkit-text-stroke:.3px #8fd13f"><span style="width:7.73px;transform:scaleX(0.87)">0</span><span style="width:7.73px;transform:scaleX(0.87)"> </span><span style="width:7.73px;transform:scaleX(0.87)">0</span><span style="width:7.73px;transform:scaleX(0.87)">:</span><span style="width:7.73px;transform:scaleX(0.87)">0</span><span style="width:7.73px;transform:scaleX(0.87)">.</span><span style="width:7.73px;transform:scaleX(0.87)">0</span></div>
<div class="lcdt" style="left:572.9px;top:637.0px;font-family:'Liberation Sans',Arial,sans-serif;font-size:23.5px;line-height:23.5px;font-weight:normal;color:#86c83c;-webkit-text-stroke:.5px #86c83c"><span style="width:14.71px">0</span><span style="width:14.71px"> </span><span style="width:14.71px">0</span><span style="width:14.71px">:</span><span style="width:14.71px">6</span><span style="width:14.71px">.</span><span style="width:14.71px">6</span><span style="width:14.71px">1</span><span style="width:14.71px">7</span></div>
<svg class="a" style="left:736px;top:633px" width="20" height="34" viewBox="0 0 20 34">
 <rect x="1.5" y="1.5" width="16" height="11.5" fill="none" stroke="#5c8f2b" stroke-width="1"/>
 <path d="M5.5,8 C6.5,5.5 8.2,5.5 9.5,7 S12.5,8.5 13.6,6" fill="none" stroke="#79b637" stroke-width="1.2"/>
 <path d="M3.6,26.3 H13" stroke="#8fd13f" stroke-width="1.5"/>
 <path d="M10.3,23 L14.6,26.3 L10.3,29.6Z" fill="#8fd13f"/>
 <rect x="15.6" y="22.6" width="1.7" height="7.6" fill="#8fd13f"/>
</svg>

<!-- group 2 : transport -->
<div class="grp" style="left:781.8px;width:91.3px"></div>
<div class="btn" style="left:788px;top:627px;width:77.6px;height:19px"></div>
<div class="a" style="left:788px;top:627px;width:40px;height:19px;border-radius:3px 0 0 3px;background:linear-gradient(#a9e4af,#92d99d 50%,#82d08e);border:1px solid #689e70"></div>
<svg class="a" style="left:788px;top:627px" width="78" height="19" viewBox="0 0 78 19">
 <path d="M14.6,3 L28.3,9.2 L14.6,15.4Z" fill="#1c1c1c"/>
 <rect x="50.8" y="4" width="4.6" height="11.2" fill="#1c1c1c"/><rect x="58.4" y="4" width="4.4" height="11.2" fill="#1c1c1c"/>
</svg>
<div class="btn" style="left:788.5px;top:653px;width:77px;height:18.5px"><svg width="77" height="18" viewBox="0 0 77 18"><rect x="31.2" y="2.3" width="13.3" height="11.6" fill="#1c1c1c"/></svg></div>

<!-- group 3 : tools -->
<div class="grp" style="left:881.8px;width:127px"></div>
<div class="btn" style="left:888px;top:627.6px;width:24px;height:19px;background:linear-gradient(#a9a9a9,#c4c4c4 50%,#d8d8d8);border-color:#808080;box-shadow:inset 0 1px 2px rgba(0,0,0,.25)">
 <svg width="22" height="17" viewBox="0 0 22 17"><path d="M7.3,1.3 H14.7 M11,1.3 V15.7 M7.3,15.7 H14.7 M9.5,8.5 H12.5" stroke="#474747" stroke-width="1.2" fill="none"/></svg></div>
<div class="btn" style="left:915.6px;top:627.6px;width:23.8px;height:19px">
 <svg width="22" height="17" viewBox="0 0 22 17"><path d="M10.7,0.8 V16.2" stroke="#1c1c1c" stroke-width="1.8"/><path d="M3,8.5 H18.5" stroke="#1c1c1c" stroke-width="1.2"/><path d="M5.6,5.6 L1.6,8.5 L5.6,11.4Z M15.8,5.6 L20,8.5 L15.8,11.4Z" fill="#ddd" stroke="#1c1c1c" stroke-width="1"/></svg></div>
<div class="btn" style="left:944.1px;top:627.6px;width:23.5px;height:19px">
 <svg width="22" height="17" viewBox="0 0 22 17"><path d="M5,2 V15 M17.6,2 V15" stroke="#1c1c1c" stroke-width="2.2"/><path d="M7,8.5 H16" stroke="#1c1c1c" stroke-width="1.9"/><path d="M10,5.3 L6,8.5 L10,11.7Z M12.7,5.3 L16.6,8.5 L12.7,11.7Z" fill="#1c1c1c"/></svg></div>
<div class="btn" style="left:979.6px;top:627.6px;width:23.4px;height:18.6px">
 <svg width="21" height="17" viewBox="0 0 21 17"><g transform="rotate(-40 10.5 8.5)"><rect x="8.7" y="0.6" width="3.6" height="11.4" rx="1.2" fill="#b4b4b4" stroke="#8c8c8c" stroke-width=".7"/><path d="M8.7,12 H12.3 L10.5,15.4Z" fill="#d2d2d2" stroke="#8c8c8c" stroke-width=".5"/><path d="M9.7,13.8 L10.5,15.9 L11.3,13.8Z" fill="#3a3a3a"/></g></svg></div>
<div class="btn" style="left:979.6px;top:651.1px;width:23.4px;height:18.7px">
 <svg width="21" height="17" viewBox="0 0 21 17"><circle cx="5.2" cy="5.4" r="1.7" fill="none" stroke="#444" stroke-width="1"/><circle cx="5.2" cy="11.2" r="1.7" fill="none" stroke="#444" stroke-width="1"/><path d="M6.5,6.2 L17.6,11.2 L13.2,11.4 L6.2,7.2Z M6.5,10.4 L17.6,5.4 L13.2,5.2 L6.2,9.4Z" fill="#1c1c1c"/></svg></div>
<div class="sel" style="left:888.7px;top:652.7px;width:78.5px;height:16.5px"><span style="left:10.4px;top:2.2px">Sample</span>
 <svg style="left:64.8px;top:3.2px" width="8" height="11" viewBox="0 0 8 11"><path d="M4,0.6 L6.7,4 H1.3Z M4,10.4 L6.7,7 H1.3Z" fill="#222"/></svg></div>

<!-- group 4 : move / fade -->
<div class="grp" style="left:1017.6px;width:84.8px"></div>
<div class="btn" style="left:1024.3px;top:627.6px;width:43.8px;height:19px">
 <svg width="42" height="17" viewBox="0 0 42 17"><path d="M20.8,3.8 V13.8 M15,8.8 H26.6" stroke="#1c1c1c" stroke-width="1.3"/><path d="M20.8,1.6 L23.1,5.3 H18.5Z M20.8,16 L23.1,12.3 H18.5Z M12.8,8.8 L16.7,6.4 V11.2Z M28.8,8.8 L24.9,6.4 V11.2Z" fill="#1c1c1c"/></svg></div>
<div class="btn" style="left:1072.3px;top:627.6px;width:23.5px;height:19px">
 <svg width="22" height="17" viewBox="0 0 22 17"><path d="M6,4.2 L16,13.4" stroke="#1c1c1c" stroke-width="3"/><path d="M3.8,2.2 H10.8 L3.8,8.8Z M18.2,15.4 H11.2 L18.2,8.8Z" fill="#1c1c1c"/></svg></div>
<div class="btn" style="left:1024.3px;top:651.1px;width:43.8px;height:18.8px">
 <svg width="42" height="17" viewBox="0 0 42 17"><path d="M7.6,4 Q7.6,3.3 8.3,3.3 H14.4 Q15.1,3.3 15.1,4 V8.9 Q15.1,10.9 11.35,12.9 Q7.6,10.9 7.6,8.9Z M26.9,4 Q26.9,3.3 27.6,3.3 H33.6 Q34.3,3.3 34.3,4 V8.9 Q34.3,10.9 30.6,12.9 Q26.9,10.9 26.9,8.9Z" fill="#262626"/></svg></div>
<div class="btn" style="left:1072.3px;top:651.1px;width:23.5px;height:18.8px">
 <svg width="22" height="17" viewBox="0 0 22 17"><path d="M3.8,2.7 V14.5 H18.2Z" fill="#1c1c1c"/></svg></div>

</body>
</html>
